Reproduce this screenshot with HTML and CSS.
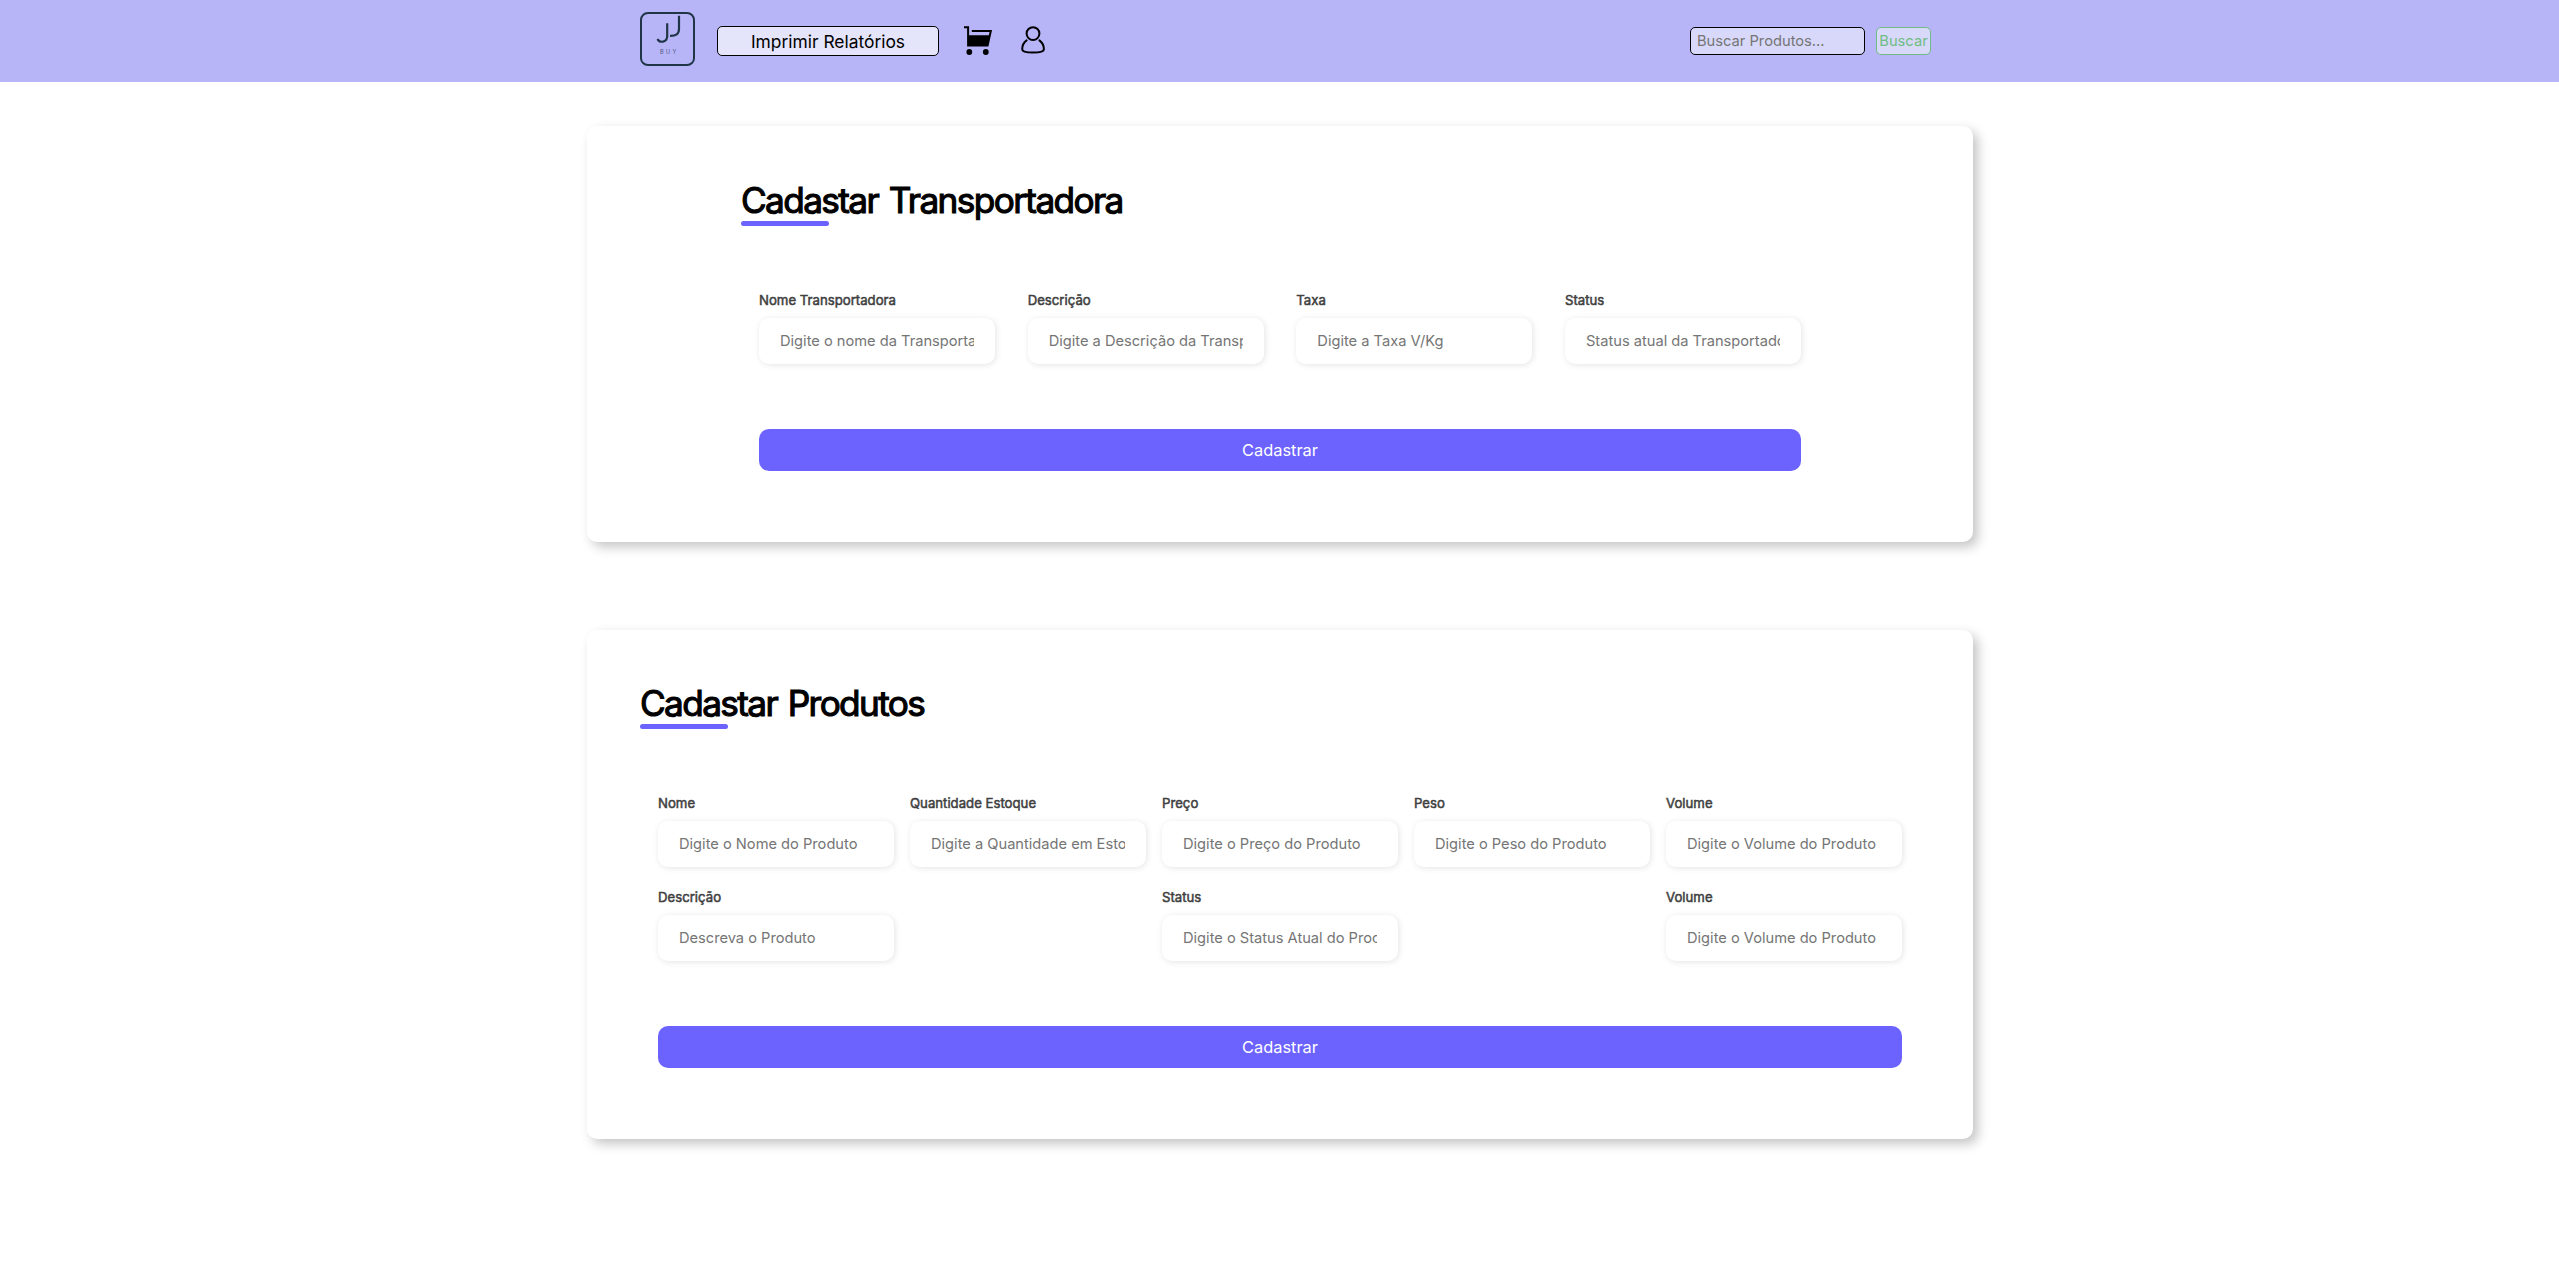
FILE: index.html
```html
<!DOCTYPE html>
<html lang="pt-BR">
<head>
<meta charset="utf-8">
<title>JJ Buy</title>
<link rel="stylesheet" href="styles.css">
</head>
<body>
<header class="topbar">
  <nav class="nav">
    <svg class="logo" viewBox="0 0 55 55" width="55" height="54" preserveAspectRatio="none">
      <rect x="1" y="1" width="53" height="53" rx="7"/>
      <path class="letter" d="M27.2 11.5V24.5C27.2 31 19.5 32 17.5 27.5"/>
      <path class="letter" d="M39 3.8V17C39 22.5 36 24.4 30 24.3"/>
      <text x="29.3" y="42.3" text-anchor="middle">BUY</text>
    </svg>
    <button class="report">Imprimir Relatórios</button>
    <svg class="cart" viewBox="0 0 30 30" width="30" height="30">
      <path d="M1 2.2H5.1V20.6H24.6L27.8 6H8.8" fill="none" stroke="#000" stroke-width="2"/>
      <path d="M5 10.3H26.8L24.6 20.6H5Z"/>
      <circle cx="6.3" cy="27" r="2.9"/><circle cx="22.8" cy="27" r="2.9"/>
    </svg>
    <svg class="user" viewBox="0 0 24 28" width="24" height="28">
      <circle cx="12" cy="7.6" r="6.4"/>
      <path d="M5.6 14.4C2.5 16.7 1.2 20 1.2 23.2C1.2 25.6 5.5 26.5 12 26.5S22.9 25.6 22.9 23.2C22.9 20 21.5 16.7 18.4 14.4"/>
    </svg>
  </nav>
  <form class="search">
    <input class="search-input" placeholder="Buscar Produtos...">
    <button class="search-button" type="button">Buscar</button>
  </form>
</header>
<main>
  <section class="card carrier">
    <h1>Cadastar Transportadora</h1>
    <form class="form">
      <div class="fields">
        <label class="field">Nome Transportadora<input placeholder="Digite o nome da Transportadora"></label>
        <label class="field">Descrição<input placeholder="Digite a Descrição da Transportadora"></label>
        <label class="field">Taxa<input placeholder="Digite a Taxa V/Kg"></label>
        <label class="field">Status<input placeholder="Status atual da Transportadora"></label>
      </div>
      <button class="submit" type="button">Cadastrar</button>
    </form>
  </section>
  <section class="card product">
    <h1>Cadastar Produtos</h1>
    <form class="form">
      <div class="fields">
        <label class="field">Nome<input placeholder="Digite o Nome do Produto"></label>
        <label class="field">Quantidade Estoque<input placeholder="Digite a Quantidade em Estoque"></label>
        <label class="field">Preço<input placeholder="Digite o Preço do Produto"></label>
        <label class="field">Peso<input placeholder="Digite o Peso do Produto"></label>
        <label class="field">Volume<input placeholder="Digite o Volume do Produto"></label>
      </div>
      <div class="fields">
        <label class="field">Descrição<input placeholder="Descreva o Produto"></label>
        <label class="field">Status<input placeholder="Digite o Status Atual do Produto"></label>
        <label class="field">Volume<input placeholder="Digite o Volume do Produto"></label>
      </div>
      <button class="submit" type="button">Cadastrar</button>
    </form>
  </section>
</main>
</body>
</html>
```
FILE: styles.css
```css
* { box-sizing: border-box; margin: 0; padding: 0; font-family: Inter, "Liberation Sans", sans-serif; }
body { min-height: 1271px; background: #fff; }
.topbar {
  display: flex; justify-content: space-between; align-items: center;
  height: 82px; padding: 0 628px 0 640px; background: #b7b5f8;
}
.nav { display: flex; align-items: center; height: 82px; }
.logo { margin: -4px 22px 0 0; }
.logo rect, .logo path { fill: none; stroke: #203647; stroke-width: 2; }
.logo .letter { stroke-width: 2.2; }
.logo text { font-size: 5.6px; letter-spacing: 2.4px; fill: #4c5680; }
.report {
  width: 222px; height: 30px; border: 1px solid #000; border-radius: 5px;
  background: #e4e4fb; color: #000; font-size: 17.4px;
}
.cart { margin: -2px 0 0 24px; }
.user { margin: -3px 0 0 28px; }
.user * { fill: none; stroke: #000; stroke-width: 2; stroke-linecap: round; }
.search { display: flex; gap: 11px; }
.search-input {
  width: 175px; height: 28px; padding: 0 6px; border: 1px solid #000;
  border-radius: 5px; background: #d8d8fa; font-size: 14.7px;
}
.search-button {
  width: 55px; height: 28px; border: 1px solid #6fbd83; border-radius: 5px;
  background: #d8d8fa; color: #6fbd83; font-size: 14.7px;
}
main { display: flex; flex-direction: column; align-items: center; gap: 88px; padding: 44px 0 0 1px; }
.card {
  width: 1386px; background: #fff; border-radius: 10px;
  box-shadow: 5px 5px 12px rgba(0, 0, 0, .23);
}
.carrier { height: 416px; padding: 53px 154px 0; }
.product { height: 509px; padding: 52px 53px 0; }
h1 {
  font-size: 35.2px; line-height: 42px; font-weight: 400; letter-spacing: -1.62px; word-spacing: 2.4px;
  -webkit-text-stroke: 1.1px #000;
}
h1::after {
  content: ""; display: block; width: 88px; height: 5.3px;
  border-radius: 10px; background: #6c63ff;
}
.form { padding: 63.7px 18px 0; }
.fields { display: flex; justify-content: space-between; }
.fields + .fields { margin-top: 20px; }
.field {
  display: flex; flex-direction: column; gap: 8px; width: 236px;
  font-size: 13.2px; line-height: 20px; color: #404040; -webkit-text-stroke: .5px #404040;
}
.field input {
  width: 100%; height: 46px; padding: 0 21px; border: 0; border-radius: 10px;
  background: #fff; box-shadow: 1px 1px 6px #0000001c; font-size: 14.65px; -webkit-text-stroke: 0;
}
::placeholder { color: #757575; }
.submit {
  display: block; width: 100%; height: 42px; margin-top: 65px; border: 0;
  border-radius: 10px; background: #6c63ff; color: #fff; font-size: 16.4px;
}
```
